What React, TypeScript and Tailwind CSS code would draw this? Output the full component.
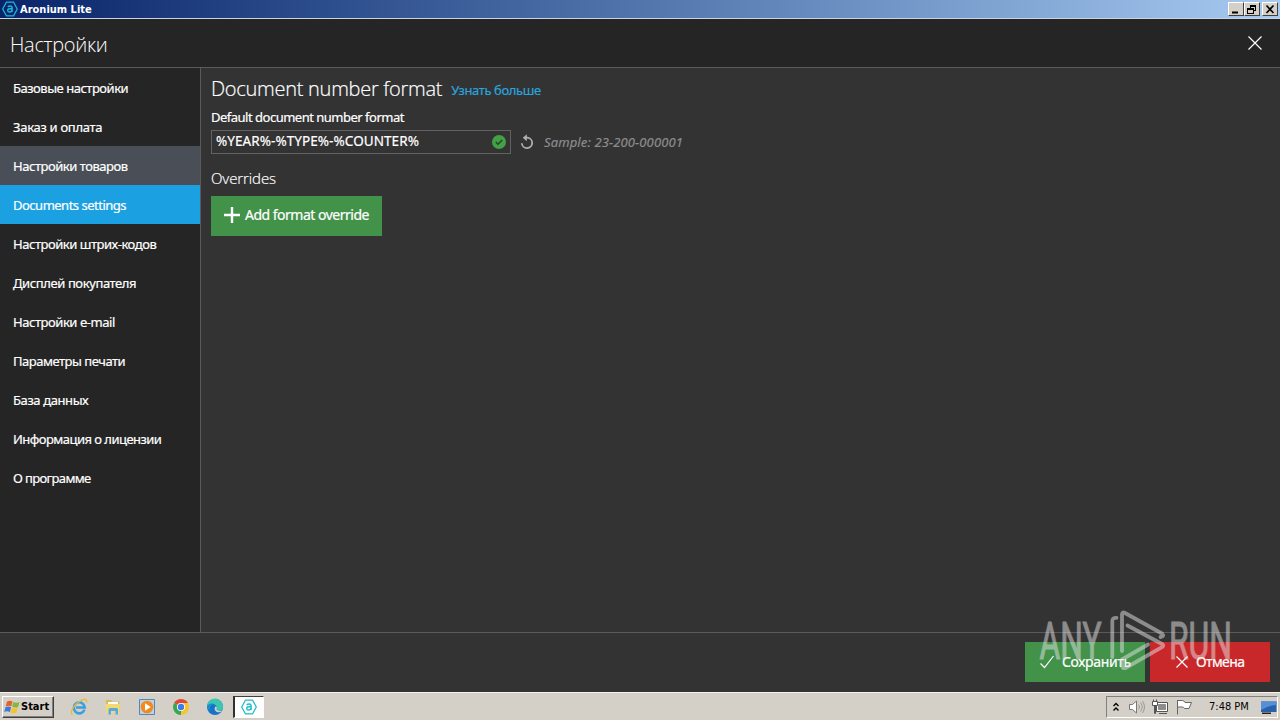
import type { ReactNode } from 'react';
import { clsx } from 'clsx';

const menu = [
  { label: 'Базовые настройки', tracking: 'tracking-[-0.48px]' },
  { label: 'Заказ и оплата', tracking: 'tracking-[-0.3px]' },
  { label: 'Настройки товаров', tracking: 'tracking-[-0.47px]', hover: true },
  { label: 'Documents settings', tracking: 'tracking-[-0.5px]', active: true },
  { label: 'Настройки штрих-кодов', tracking: 'tracking-[-0.46px]' },
  { label: 'Дисплей покупателя', tracking: 'tracking-[-0.4px]' },
  { label: 'Настройки e-mail', tracking: 'tracking-[-0.45px]' },
  { label: 'Параметры печати', tracking: 'tracking-[-0.48px]' },
  { label: 'База данных', tracking: 'tracking-[-0.4px]' },
  { label: 'Информация о лицензии', tracking: 'tracking-[-0.53px]' },
  { label: 'О программе', tracking: 'tracking-[-0.65px]' },
];

function HexLogo({ className, color }: { className: string; color: string }) {
  return (
    <svg viewBox="0 0 16 16" className={className} fill="none" stroke={color}>
      <path d="M4.4 1.2h7.2L15.3 8l-3.7 6.8H4.4L.7 8z" strokeWidth="1.3" strokeLinejoin="round" />
      <path d="M5.8 6c.6-.8 1.3-1 2.2-1 1.400 0 2.100.7 2.100 2v4M10.100 7.700H8c-1.500 0-2.300.6-2.300 1.700 0 1 .7 1.600 1.800 1.600 1.500 0 2.600-.9 2.600-2.200" strokeWidth="1.4" />
    </svg>
  );
}

function CaptionButton({ children }: { children: ReactNode }) {
  return (
    <button className="flex h-[14px] w-4 items-center justify-center border border-t-white border-r-[#404040] border-b-[#404040] border-l-white bg-[#d4d0c8]">
      <svg viewBox="0 0 12 11" className="h-[11px] w-3" fill="none" stroke="#000">{children}</svg>
    </button>
  );
}

function TitleBar() {
  return (
    <div className="flex h-[19px] shrink-0 items-center border-b border-[#c9d3e2] bg-linear-to-r from-[#0a246a] to-[#a6caf0] pr-0.5 pl-0.5">
      <HexLogo className="h-4 w-4" color="#1cb8dc" />
      <span className="ml-0.5 font-['DejaVu_Sans_Condensed',sans-serif] text-[11px] leading-none font-bold text-white">Aronium Lite</span>
      <div className="ml-auto flex">
        <CaptionButton><path d="M2 8.500h6" strokeWidth="2" /></CaptionButton>
        <CaptionButton>
          <path d="M4 1.500h6M4.500 1v3M9.500 1v6M10 6.500H8M4 2.500h6M1.500 4v6M7.500 4v6M1 4.500h7M1 5.500h7M1 9.500h7" />
        </CaptionButton>
        <div className="w-0.5" />
        <CaptionButton><path d="m2.500 1.500 7 7.500M9.500 1.500l-7 7.500" strokeWidth="1.700" /></CaptionButton>
      </div>
    </div>
  );
}

function Sidebar() {
  return (
    <nav className="w-[201px] shrink-0 border-r border-[#5a5a5a] bg-[#252525]">
      {menu.map((m) => (
        <div
          key={m.label}
          className={clsx('flex h-[39px] items-center pt-0.5 pl-[13px] whitespace-nowrap', m.tracking, m.active && 'bg-[#1ba1e2]', m.hover && 'bg-[#4a4f57]')}
        >
          {m.label}
        </div>
      ))}
    </nav>
  );
}

function Content() {
  return (
    <main className="flex-1 bg-[#333333] pl-2.5">
      <div className="flex h-[41px] items-center pt-px">
        <h2 className="font-['Open_Sans',sans-serif] text-[20px] font-light tracking-[-0.27px] whitespace-nowrap">Document number format</h2>
        <a className="mt-0.5 ml-[9px] tracking-[-0.4px] text-[#2ba3dc]">Узнать больше</a>
      </div>
      <div className="flex h-[21px] items-start leading-4 tracking-[-0.5px]">Default document number format</div>
      <div className="flex h-6 items-center">
        <div className="flex h-6 w-[300px] items-center justify-between border border-[#626262] pr-1 pl-1">
          <span className="text-[13.5px] tracking-[0.07px]">%YEAR%-%TYPE%-%COUNTER%</span>
          <svg viewBox="0 0 14 14" className="h-[14px] w-[14px]" fill="none">
            <circle cx="7" cy="7" r="7" fill="#43a047" />
            <path d="m3.800 7 2.200 2.200 4.200-4.200" stroke="#26452a" strokeWidth="1.500" />
          </svg>
        </div>
        <svg viewBox="0 0 14 16" className="ml-[9px] h-4 w-[14px]" fill="none" stroke="#b0b0b0" strokeWidth="1.800">
          <path d="M5.500 3.700H7.500a5.200 5.200 0 1 1-5.700 5.500" />
          <path d="M6.800.2v7L2.800 3.700z" fill="#b0b0b0" stroke="none" />
        </svg>
        <span className="ml-2.5 tracking-[0.13px] text-[#8c8c8c] italic">Sample: 23-200-000001</span>
      </div>
      <h3 className="flex h-[42px] items-center pt-1.5 font-['Open_Sans',sans-serif] text-[15px] font-light tracking-[-0.1px]">Overrides</h3>
      <button className="flex h-10 w-[171px] items-center bg-[#43924a] pb-0.5 pl-[13px] text-[14px] tracking-[-0.5px] whitespace-nowrap">
        <svg viewBox="0 0 16 16" className="mr-[5px] h-4 w-4" stroke="#fff" strokeWidth="2.400"><path d="M8 0v16M0 8h16" /></svg>
        Add format override
      </button>
    </main>
  );
}

function Watermark() {
  return (
    <svg viewBox="0 0 200 66" className="pointer-events-none absolute top-[606px] left-[1035px] h-[66px] w-[200px] opacity-50" fill="none" stroke="#e4e4e4" strokeWidth="3.800" strokeLinecap="round" strokeLinejoin="round">
      <g fill="#e4e4e4" strokeWidth="1" fontFamily="Roboto, sans-serif" fontSize="51">
        <text x="4.500" y="53" textLength="62" lengthAdjust="spacingAndGlyphs">ANY</text>
        <text x="134" y="53" textLength="63" lengthAdjust="spacingAndGlyphs">RUN</text>
      </g>
      <path d="M77.300 51V15q0-3.500 4.200-3.200" />
      <path d="M87 45V8.500q0-3 3-1.500l37 20.500q3 3-1.500 3.500" />
      <path d="M92.500 19.500 127 38q2.500 1.500 0 3.200L90.500 62q-3.500 1-3.500-3v-5.500L113 38.500" />
    </svg>
  );
}

function StartFlag() {
  return (
    <svg viewBox="0 0 16 16" className="h-4 w-4">
      <path d="M3 2.500Q6 .8 8.500 2.500L7.300 7.300Q4.500 6 1.700 7.400z" fill="#e8602c" />
      <path d="M9.300 3Q12 4.300 15.500 3l-1.400 4.900q-3 1.300-5.900-.1z" fill="#82b93c" />
      <path d="M1.500 8.300q2.800-1.400 5.600-.1L5.900 13Q3 11.500.2 13z" fill="#3b78d8" />
      <path d="M8 8.700q2.800 1.400 5.800.1l-1.300 4.900q-3 1.200-5.800-.1z" fill="#f5c32c" />
    </svg>
  );
}

function IeIcon() {
  return (
    <svg viewBox="0 0 18 18" className="h-[18px] w-[18px]" fill="none">
      <path d="M14.500 11.700A5.500 5.500 0 1 1 14.800 9.400H6" stroke="#3b9fdf" strokeWidth="2.500" />
      <path d="M2.500 16.500C-.5 15 3 8 8.500 4S17.500.5 16.500 4.500" stroke="#e6bb37" strokeWidth="1.300" />
    </svg>
  );
}

function FolderIcon() {
  return (
    <svg viewBox="0 0 18 18" className="h-[18px] w-[18px]">
      <path d="M2 2h5l1 1.500h7.500V14H2z" fill="#dcb958" />
      <path d="M4 4h10v3H4z" fill="#fff" />
      <path d="M1.500 6h14.500l-.7 9H2.200z" fill="#f3d975" />
      <path d="M4.500 16.500v-5q0-1.500 1.500-1.500h6.500q1.500 0 1.500 1.500v5h-2.500v-3.500H7v3.500z" fill="#57a9df" />
    </svg>
  );
}

function PlayerIcon() {
  return (
    <svg viewBox="0 0 18 18" className="h-[18px] w-[18px]">
      <path d="M1.500 1.500h15v15h-15z" fill="#b9d4ea" stroke="#5686b5" />
      <circle cx="9" cy="9" r="6.300" fill="#f28a1a" />
      <path d="M7 5.300v7.400L12.800 9z" fill="#fff" />
    </svg>
  );
}

function ChromeIcon() {
  return (
    <svg viewBox="0 0 18 18" className="h-[18px] w-[18px]">
      <path d="M9 9 2.100 5A8 8 0 0 1 15.900 5z" fill="#df4936" />
      <path d="M9 9l6.900-4A8 8 0 0 1 9 17z" fill="#f6c52d" />
      <path d="M9 9v8A8 8 0 0 1 2.100 5z" fill="#3aa655" />
      <path d="M9 5h6.900a8 8 0 0 1 1 4z" fill="#f6c52d" />
      <circle cx="9" cy="9" r="4.100" fill="#fff" />
      <circle cx="9" cy="9" r="3.200" fill="#3c7de6" />
    </svg>
  );
}

function EdgeIcon() {
  return (
    <svg viewBox="0 0 18 18" className="h-[18px] w-[18px]">
      <circle cx="9" cy="9" r="8" fill="#1673c5" />
      <path d="M1 8a8 8 0 0 1 16 1c0 3-2 4-4.500 4-2 0-2.500-1-2-2C11.500 8.500 9.500 6 6.500 6 4 6 2 7 1 8.500z" fill="#3cc5b0" />
      <path d="M9.500 8.500C8 10 8.500 13 11 14c2 .7 4 .2 5.500-1.500-1 .5-2.500.7-4 .3-2-.6-2.200-1.500-1.700-2.500.3-1-.3-2-1.300-1.800z" fill="#d4d0c8" />
      <path d="M1.500 7.500C3 5.500 6 5 8 6c-3 .5-5 3.500-4 7-1.500-1-3-3-2.500-5.500z" fill="#1c8fd4" />
    </svg>
  );
}

function Tray() {
  return (
    <div className="mr-0.5 ml-auto flex h-[22px] w-[172px] items-center border border-t-[#808080] border-r-white border-b-white border-l-[#808080] pl-[5px]">
      <svg viewBox="0 0 8 10" className="h-2.5 w-2" fill="none" stroke="#000" strokeWidth="1.400"><path d="M1.500 4 4 1.500 6.500 4M1.500 8.500 4 6l2.500 2.500" /></svg>
      <svg viewBox="0 0 18 16" className="ml-2 h-4 w-[18px]" fill="none" stroke="#777" strokeWidth="1">
        <path d="M1.500 5.500h3L8.500 2v12l-4-3.500h-3z" fill="#fff" />
        <path d="M10.500 5.500q2 2.500 0 5M12.500 3.500q3.500 4.500 0 9M14.500 2q4 6 0 12" stroke="#8a8a8a" strokeWidth=".8" />
      </svg>
      <svg viewBox="0 0 16 16" className="ml-1.5 h-4 w-4" fill="none" stroke="#555">
        <path d="M4.500 3.500h11v9h-11z" fill="#fff" />
        <path d="M6.500 5.500h7v5h-7z" fill="#8c8c8c" stroke="#8c8c8c" />
        <path d="M7 14.500h8" />
        <path d="M.500 2.500h5v4h-5zM1.500.500v2M4.500.500v2M2.500 6.500h1v8h-1z" fill="#fff" />
      </svg>
      <svg viewBox="0 0 18 16" className="ml-2 h-4 w-[18px]" fill="#fff" stroke="#666">
        <path d="M1.500 1v14.500M1.500 1.500h5q1.500 0 2.500 2h6.500L13 9.500H8.500q-1-1.500-2-1.500h-5z" />
      </svg>
      <span className="ml-[15px] font-['DejaVu_Sans_Condensed',sans-serif] text-[11px] leading-none whitespace-nowrap text-black">7:48 PM</span>
      <svg viewBox="0 0 16 14" className="ml-auto h-[14px] w-4">
        <path d="M0 1.500h15.500V12H0z" fill="#2860ad" />
        <path d="M0 1.500h15.500V5Q8 5 0 10z" fill="#5590d6" />
        <path d="M1 12.500h9v1.500H1z" fill="#222" />
      </svg>
    </div>
  );
}

function Taskbar() {
  return (
    <div className="flex h-7 shrink-0 items-center border-t border-[#f4f3f0] bg-[#d4d0c8]">
      <button className="ml-0.5 flex h-[22px] w-[52px] items-center gap-px border border-t-white border-r-[#404040] border-b-[#404040] border-l-white pl-px font-['DejaVu_Sans_Condensed',sans-serif] text-[11px] leading-none font-bold text-black shadow-[inset_-1px_-1px_0_#808080]">
        <StartFlag />
        Start
      </button>
      <div className="ml-4 flex items-center gap-4">
        <IeIcon />
        <FolderIcon />
        <PlayerIcon />
        <ChromeIcon />
        <EdgeIcon />
      </div>
      <div className="ml-[9px] flex h-[22px] w-[31px] items-center justify-center border-t border-r border-b border-l-2 border-t-[#404040] border-r-white border-b-white border-l-[#303030] bg-white">
        <HexLogo className="h-4 w-4" color="#22bcc8" />
      </div>
      <Tray />
    </div>
  );
}

export default function App() {
  return (
    <div className="relative flex h-[720px] w-[1280px] flex-col overflow-hidden bg-[#333333] font-['Noto_Sans',sans-serif] text-[13px] leading-none text-white">
      <TitleBar />
      <header className="flex h-[49px] shrink-0 items-center justify-between border-b border-[#5a5a5a] bg-[#252525] pr-[18px] pl-2.5">
        <h1 className="pt-[3px] font-['Open_Sans',sans-serif] text-[20px] font-light tracking-[-0.3px]">Настройки</h1>
        <svg viewBox="0 0 14 14" className="h-[14px] w-[14px]" stroke="#fff" strokeWidth="1.200"><path d="m.500.500 13 13M13.500.500l-13 13" /></svg>
      </header>
      <div className="flex min-h-0 flex-1 [-webkit-text-stroke:0.2px]">
        <Sidebar />
        <Content />
      </div>
      <footer className="flex h-[60px] shrink-0 justify-end gap-[5px] border-t border-[#5a5a5a] bg-[#333333] pt-[9px] pr-2.5 text-[14px] [-webkit-text-stroke:0.2px]">
        <button className="flex h-10 w-[120px] items-center bg-[#43924a] pl-[15px] tracking-[-0.35px]">
          <svg viewBox="0 0 14 14" className="mr-2 h-[14px] w-[14px]" fill="none" stroke="#fff" strokeWidth="1.200"><path d="m.500 8.500 4 4L13.500 1" /></svg>
          Сохранить
        </button>
        <button className="flex h-10 w-[120px] items-center bg-[#c8282a] pl-[26px] tracking-[-0.6px]">
          <svg viewBox="0 0 12 12" className="mr-2 h-3 w-3" stroke="#fff" strokeWidth="1.200"><path d="m.500.500 11 11M11.500.500l-11 11" /></svg>
          Отмена
        </button>
      </footer>
      <Taskbar />
      <Watermark />
    </div>
  );
}
